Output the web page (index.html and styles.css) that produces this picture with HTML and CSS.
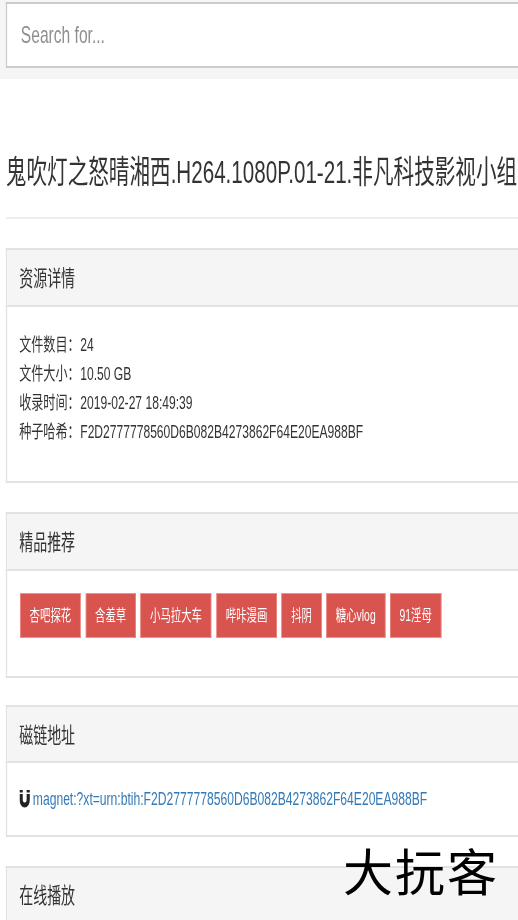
FILE: index.html
```html
<!DOCTYPE html>
<html lang="zh-CN">
<head>
  <meta charset="UTF-8" />
  <title>资源详情</title>
  <link rel="stylesheet" href="styles.css">
</head>
<body>

  <div class="page">
    <div class="top-bar">
      <input class="search-input" type="text" placeholder="Search for...">
    </div>

    <h1 class="title">鬼吹灯之怒晴湘西.H264.1080P.01-21.非凡科技影视小组</h1>
    <hr class="title-line">

    <div class="panel panel-info">
      <div class="panel-heading">资源详情</div>
      <div class="panel-body">
        <div class="info-row"><span class="info-label">文件数目：</span>24</div>
        <div class="info-row"><span class="info-label">文件大小：</span>10.50 GB</div>
        <div class="info-row"><span class="info-label">收录时间：</span>2019-02-27 18:49:39</div>
        <div class="info-row"><span class="info-label">种子哈希：</span>F2D2777778560D6B082B4273862F64E20EA988BF</div>
      </div>
    </div>

    <div class="panel panel-tags">
      <div class="panel-heading">精品推荐</div>
      <div class="panel-body tags">
        <a class="tag">杏吧探花</a>
        <a class="tag">含羞草</a>
        <a class="tag">小马拉大车</a>
        <a class="tag">哔咔漫画</a>
        <a class="tag">抖阴</a>
        <a class="tag">糖心vlog</a>
        <a class="tag">91淫母</a>
      </div>
    </div>

    <div class="panel panel-magnet">
      <div class="panel-heading">磁链地址</div>
      <div class="panel-body magnet-row">
        <svg class="magnet-icon" viewBox="0 0 16 18">
          <path d="M0 0h5v2.5H0zM11 0h5v2.5h-5zM0 4h5v5.5a3 3 0 0 0 6 0V4h5v5.5a8 8 0 0 1-16 0z"/>
        </svg>
        <a class="magnet-link">magnet:?xt=urn:btih:F2D2777778560D6B082B4273862F64E20EA988BF</a>
      </div>
    </div>

    <div class="panel panel-play">
      <div class="panel-heading">在线播放</div>
    </div>
  </div>

  <div class="watermark">大抏客</div>

</body>
</html>
```

FILE: styles.css
```css
html, body {
  height: 920px;
  overflow: hidden;
}
body {
  margin: 0;
  background: #fff;
  font-family: "Liberation Sans", "Noto Sans CJK SC", sans-serif;
  color: #333;
}
/* the whole shot is squeezed sideways, so the page is laid out wide and scaled */
.page {
  width: 797px;
  transform: scaleX(0.65);
  transform-origin: 0 0;
  filter: blur(0.45px);
}
.top-bar {
  height: 79px;
  padding: 2px 0 0 9px;
  box-sizing: border-box;
  background: #f5f5f5;
}
.search-input {
  display: block;
  width: 100%;
  height: 66px;
  box-sizing: border-box;
  padding: 0 21px;
  border: 2px solid #ccc;
  border-right: 0;
  background: #fff;
  font-family: inherit;
  font-size: 24px;
}
.search-input::placeholder {
  color: #8f8f8f;
  opacity: 1;
}
.title {
  margin: 72px 0 0 9px;
  font-size: 31.7px;
  font-weight: 400;
  line-height: 42px;
  white-space: nowrap;
}
.title-line {
  margin: 24px 0 29px 9px;
  border: 0;
  border-top: 2px solid #eee;
}
.panel {
  margin: 0 0 29px 9px;
  border: 2px solid #e2e2e2;
  border-right: 0;
  background: #fff;
}
.panel-heading {
  height: 55px;
  padding-left: 18.5px;
  border-bottom: 2px solid #e2e2e2;
  background: #f5f5f5;
  font-size: 21.5px;
  line-height: 59px;
}
.panel-body {
  padding: 21px 18.5px;
}
.panel-info .panel-body {
  height: 174px;
  box-sizing: border-box;
}
.info-row {
  height: 29px;
  font-size: 18.6px;
  line-height: 29px;
  white-space: nowrap;
}
.info-label {
  margin-right: 1px;
  font-family: "Noto Sans CJK TC", sans-serif;
}
.panel-tags {
  margin-bottom: 27px;
}
.panel-tags .panel-body {
  height: 105px;
  padding-top: 22px;
  box-sizing: border-box;
}
.tags {
  display: flex;
  align-items: flex-start;
  gap: 7.5px;
  padding-left: 20px;
}
.tag {
  padding: 0 13.55px;
  height: 43px;
  border: 1px solid #f0908c;
  background: #d9534f;
  color: #fff;
  font-size: 16px;
  line-height: 43px;
  white-space: nowrap;
}
.panel-magnet .panel-heading {
  height: 54px;
  line-height: 58px;
}
.panel-magnet .panel-body {
  height: 72px;
  box-sizing: border-box;
}
.magnet-row {
  display: flex;
  align-items: center;
  gap: 5px;
  padding-top: 0;
  padding-bottom: 0;
}
.magnet-icon {
  width: 16px;
  height: 18px;
  fill: #222;
}
.magnet-link {
  color: #337ab7;
  font-size: 18.65px;
  white-space: nowrap;
}
.panel-play .panel-heading {
  line-height: 57px;
}
.watermark {
  position: absolute;
  left: 343px;
  top: 838px;
  font-size: 50px;
  line-height: 72px;
  letter-spacing: 2px;
  color: #000;
  white-space: nowrap;
}
```
